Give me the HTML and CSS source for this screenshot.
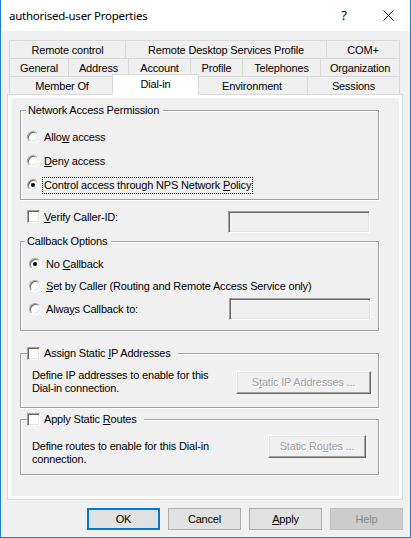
FILE: index.html
```html
<!DOCTYPE html>
<html>
<head>
<meta charset="utf-8">
<title>authorised-user Properties</title>
<link rel="stylesheet" href="styles.css">
</head>
<body>
<div class="window">
  <header class="titlebar">
    <span class="title">authorised-user Properties</span>
    <span class="tb-btn">?</span>
    <span class="tb-btn"><svg width="11" height="11" viewBox="0 0 11 11"><path d="M0.5 0.5L10.5 10.5M10.5 0.5L0.5 10.5" stroke="#000" stroke-width="1" fill="none"/></svg></span>
  </header>

  <nav class="tabs">
    <div class="tabrow">
      <span class="tab tab-remote">Remote control</span>
      <span class="tab tab-rds">Remote Desktop Services Profile</span>
      <span class="tab tab-com">COM+</span>
    </div>
    <div class="tabrow">
      <span class="tab tab-general">General</span>
      <span class="tab tab-address">Address</span>
      <span class="tab tab-account">Account</span>
      <span class="tab tab-profile">Profile</span>
      <span class="tab tab-phones">Telephones</span>
      <span class="tab tab-org">Organization</span>
    </div>
    <div class="tabrow">
      <span class="tab tab-member">Member Of</span>
      <span class="tab tab-dialin selected">Dial-in</span>
      <span class="tab tab-env">Environment</span>
      <span class="tab tab-sessions">Sessions</span>
    </div>
  </nav>

  <section class="panel">
    <div class="page">
      <fieldset class="group nap">
        <legend>Network Access Permission</legend>
        <div class="opt"><span class="radio"></span><span>Allo<u>w</u> access</span></div>
        <div class="opt"><span class="radio"></span><span><u>D</u>eny access</span></div>
        <div class="opt"><span class="radio checked"></span><span class="focus">Control access through NPS Network <u>P</u>olicy</span></div>
      </fieldset>

      <div class="verify">
        <span class="check"></span>
        <span class="verify-label"><u>V</u>erify Caller-ID:</span>
        <span class="textbox verify-box"></span>
      </div>

      <fieldset class="group callback">
        <legend>Callback Options</legend>
        <div class="opt"><span class="radio checked"></span><span>No <u>C</u>allback</span></div>
        <div class="opt"><span class="radio"></span><span><u>S</u>et by Caller (Routing and Remote Access Service only)</span></div>
        <div class="opt opt-last"><span class="radio"></span><span class="grow">Alwa<u>y</u>s Callback to:</span><span class="textbox cb-box"></span></div>
      </fieldset>

      <fieldset class="group staticip">
        <legend><span class="check"></span><span>Assign Static <u>I</u>P Addresses</span></legend>
        <div class="desc-row">
          <span class="desc">Define IP addresses to enable for this<br>Dial-in connection.</span>
          <span class="cbtn ip-btn">S<u>t</u>atic IP Addresses ...</span>
        </div>
      </fieldset>

      <fieldset class="group routes">
        <legend><span class="check"></span><span>Apply Static <u>R</u>outes</span></legend>
        <div class="desc-row top">
          <span class="desc">Define routes to enable for this Dial-in<br>connection.</span>
          <span class="cbtn rt-btn">Static Ro<u>u</u>tes ...</span>
        </div>
      </fieldset>
    </div>
  </section>

  <footer class="actions">
    <span class="btn default">OK</span>
    <span class="btn">Cancel</span>
    <span class="btn"><u>A</u>pply</span>
    <span class="btn disabled">Help</span>
  </footer>
</div>
</body>
</html>
```

FILE: styles.css
```css
* { box-sizing: border-box; }
html, body { margin: 0; padding: 0; }
body {
  width: 411px;
  height: 538px;
  overflow: hidden;
  font-family: "Liberation Sans", Arial, sans-serif;
  font-size: 11px;
  letter-spacing: -0.18px;
  line-height: 13px;
  color: #000;
  background: #f0f0f0;
}
u { text-decoration-thickness: 1px; text-underline-offset: 1px; }

.window {
  width: 411px;
  height: 538px;
  border: 1px solid #1a7fd4;
  border-top: 0;
  background: #f0f0f0;
  display: flex;
  flex-direction: column;
}

/* title bar */
.titlebar {
  flex: none;
  height: 31px;
  background: #fff;
  display: flex;
  align-items: center;
  padding-left: 8px;
}
.title {
  flex: 1;
  font-family: "Noto Sans", "Open Sans", sans-serif;
  font-size: 11.5px;
  letter-spacing: -0.25px;
}
.tb-btn {
  width: 44px;
  height: 31px;
  display: flex;
  align-items: center;
  justify-content: center;
  font-family: "Noto Sans", sans-serif;
  font-size: 13px;
  letter-spacing: 0;
}

/* tabs */
.tabs { flex: none; margin: 9px 0 0 8px; width: 391px; }
.tabrow { display: flex; height: 18px; }
.tab {
  flex: none;
  height: 18px;
  border: 1px solid #d9d9d9;
  border-right: 0;
  border-bottom: 0;
  background: #f0f0f0;
  display: flex;
  align-items: center;
  justify-content: center;
  white-space: nowrap;
  padding-top: 2px;
}
.tab:last-child { border-right: 1px solid #d9d9d9; }
.tab.selected {
  position: relative;
  z-index: 1;
  height: 21px;
  margin: -2px -3px -1px -2px;
  border-right: 1px solid #d9d9d9;
  background: #fff;
  align-items: flex-start;
  padding-top: 3px;
}
.tab-remote { width: 116px; }
.tab-rds { width: 201px; }
.tab-com { width: 74px; }
.tab-general { width: 59px; }
.tab-address { width: 60px; }
.tab-account { width: 62px; }
.tab-profile { width: 52px; }
.tab-phones { width: 78px; }
.tab-org { width: 80px; }
.tab-member { width: 105px; }
.tab-dialin { width: 87px; }
.tab-env { width: 111px; }
.tab-sessions { width: 93px; }

/* panel */
.panel {
  flex: none;
  margin: 0 7px 0 6px;
  height: 406px;
  border: 1px solid #d9d9d9;
  background: #fff;
  padding: 3px;
}
.page {
  height: 100%;
  background: #f0f0f0;
  padding-top: 6px;
}

/* group boxes */
.group {
  margin: 0 0 0 9px;
  width: 359px;
  min-width: 0;
  border: 1px solid #a0a0a0;
  box-shadow: inset 1px 1px #fff, 1px 1px #fff;
  padding: 0;
}
.group legend {
  height: 13px;
  line-height: 13px;
  padding: 0 4px 0 2px;
  background: #f0f0f0;
}
.nap legend { margin-left: 5px; }
.nap { padding: 8px 0 2px 0; }
.callback legend { margin-left: 4px; }
.callback { margin-top: 2px; padding: 5px 0 9px 0; }

.opt {
  display: flex;
  align-items: center;
  height: 24px;
  gap: 5px;
}
.nap .opt { padding-left: 6px; }
.callback .opt { padding-left: 8px; height: 22px; }
.callback .opt-last { height: 24px; }
.grow { flex: 1; }

.focus {
  outline: 1px dotted #000;
  padding: 1px 1px;
  margin-left: -1px;
}

/* classic radio */
.radio {
  flex: none;
  width: 12px;
  height: 12px;
  border-radius: 50%;
  border: 1px solid;
  border-color: #a0a0a0 #fff #fff #a0a0a0;
  box-shadow: inset 1px 1px #696969, inset -1px -1px #e3e3e3;
  background: #fff;
  display: flex;
  align-items: center;
  justify-content: center;
}
.radio.checked::after {
  content: "";
  width: 4px;
  height: 4px;
  border-radius: 50%;
  background: #000;
}

/* classic checkbox */
.check {
  flex: none;
  width: 13px;
  height: 13px;
  border: 1px solid;
  border-color: #a0a0a0 #fff #fff #a0a0a0;
  box-shadow: inset 1px 1px #696969, inset -1px -1px #e3e3e3;
  background: #fff;
}

/* disabled edit box */
.textbox {
  flex: none;
  display: block;
  width: 142px;
  height: 22px;
  border: 1px solid;
  border-color: #a0a0a0 #fff #fff #a0a0a0;
  box-shadow: inset 1px 1px #696969, inset -1px -1px #e3e3e3;
  background: #f0f0f0;
}

.verify {
  display: flex;
  align-items: flex-start;
  margin: 10px 29px 0 16px;
  height: 23px;
}
.verify .check { margin-top: 0; }
.verify-label { flex: 1; margin-left: 4px; margin-top: 1px; }
.verify-box { margin-top: 1px; }
.cb-box { margin-right: 7px; }

/* check-legend groups */
.staticip, .routes { padding: 0; }
.staticip legend, .routes legend {
  display: flex;
  align-items: center;
  gap: 4px;
  margin-left: 6px;
  padding: 0 7px 0 0;
}
.staticip { margin-top: 16px; padding: 9px 0 12px 0; }
.routes { margin-top: 5px; padding: 9px 0 8px 0; }

.desc-row {
  display: flex;
  align-items: center;
  justify-content: space-between;
  padding-left: 11px;
}
.desc-row.top { align-items: flex-start; }
.desc-row.top .desc { margin-top: 5px; }

.cbtn {
  flex: none;
  height: 23px;
  display: flex;
  align-items: center;
  justify-content: center;
  border: 1px solid;
  border-color: #fff #696969 #696969 #fff;
  box-shadow: inset -1px -1px #a0a0a0, inset 1px 1px #e3e3e3;
  background: #f0f0f0;
  color: #a0a0a0;
  text-shadow: 1px 1px #fff;
}
.ip-btn { width: 135px; margin-right: 7px; }
.rt-btn { width: 98px; margin-right: 12px; }

/* dialog buttons */
.actions {
  flex: none;
  display: flex;
  justify-content: flex-end;
  gap: 8px;
  padding-right: 7px;
  margin-top: 8px;
}
.btn {
  width: 73px;
  height: 22px;
  background: #e1e1e1;
  border: 1px solid #adadad;
  display: flex;
  align-items: center;
  justify-content: center;
}
.btn.default { border: 2px solid #0078d7; }
.btn.disabled { background: #cccccc; border-color: #bfbfbf; color: #8a8a8a; }
```
